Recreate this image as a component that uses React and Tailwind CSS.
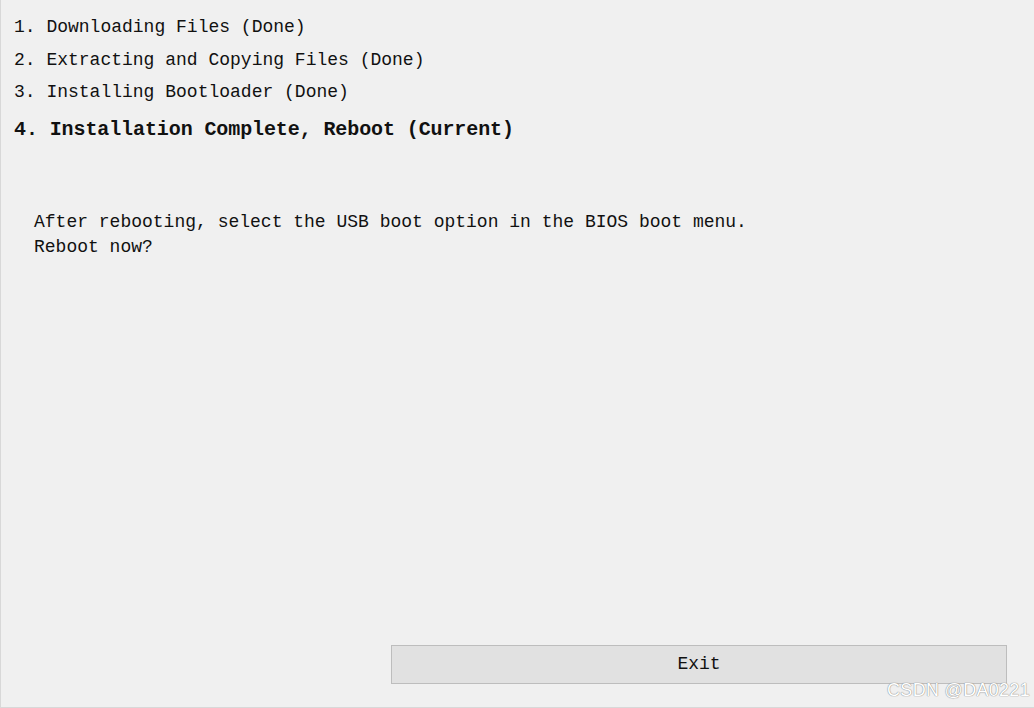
import React from "react";

const STEPS = [
  "1. Downloading Files (Done)",
  "2. Extracting and Copying Files (Done)",
  "3. Installing Bootloader (Done)",
];

export default function App() {
  return (
    <div
      className="relative flex h-[708px] w-[1034px] flex-col overflow-hidden border-l border-b border-[#d8d8d8] bg-[#f0f0f0] text-[#111]"
      style={{ fontFamily: '"Liberation Mono", "DejaVu Sans Mono", monospace' }}
    >
      <div className="pl-[13px] pt-[11px]">
        {STEPS.map((s) => (
          <div key={s} className="h-[32.5px] text-[18px] leading-[32px] whitespace-pre">
            {s}
          </div>
        ))}
        <div className="mt-[3px] h-[36px] text-[20px] font-bold leading-[36px] tracking-[-0.1px] whitespace-pre">
          4. Installation Complete, Reboot (Current)
        </div>
      </div>

      <div className="pl-[33px] pt-[62px] text-[18px] leading-[25px]">
        <div>After rebooting, select the USB boot option in the BIOS boot menu.</div>
        <div>Reboot now?</div>
      </div>

      <div className="flex-1" />

      <div className="flex justify-end pb-[23px] pr-[27px]">
        <button className="h-[39px] w-[616px] border border-[#bdbdbd] bg-[#e1e1e1] text-[18px] text-[#111]">
          Exit
        </button>
      </div>

      <div
        className="absolute bottom-[8px] right-[4px] text-[18px] leading-none tracking-[0.3px] text-white"
        style={{
          fontFamily: '"Liberation Sans", Arial, sans-serif',
          textShadow: "0 0 1px #888, 0 0 1px #888",
        }}
      >
        CSDN @DA0221
      </div>
    </div>
  );
}
